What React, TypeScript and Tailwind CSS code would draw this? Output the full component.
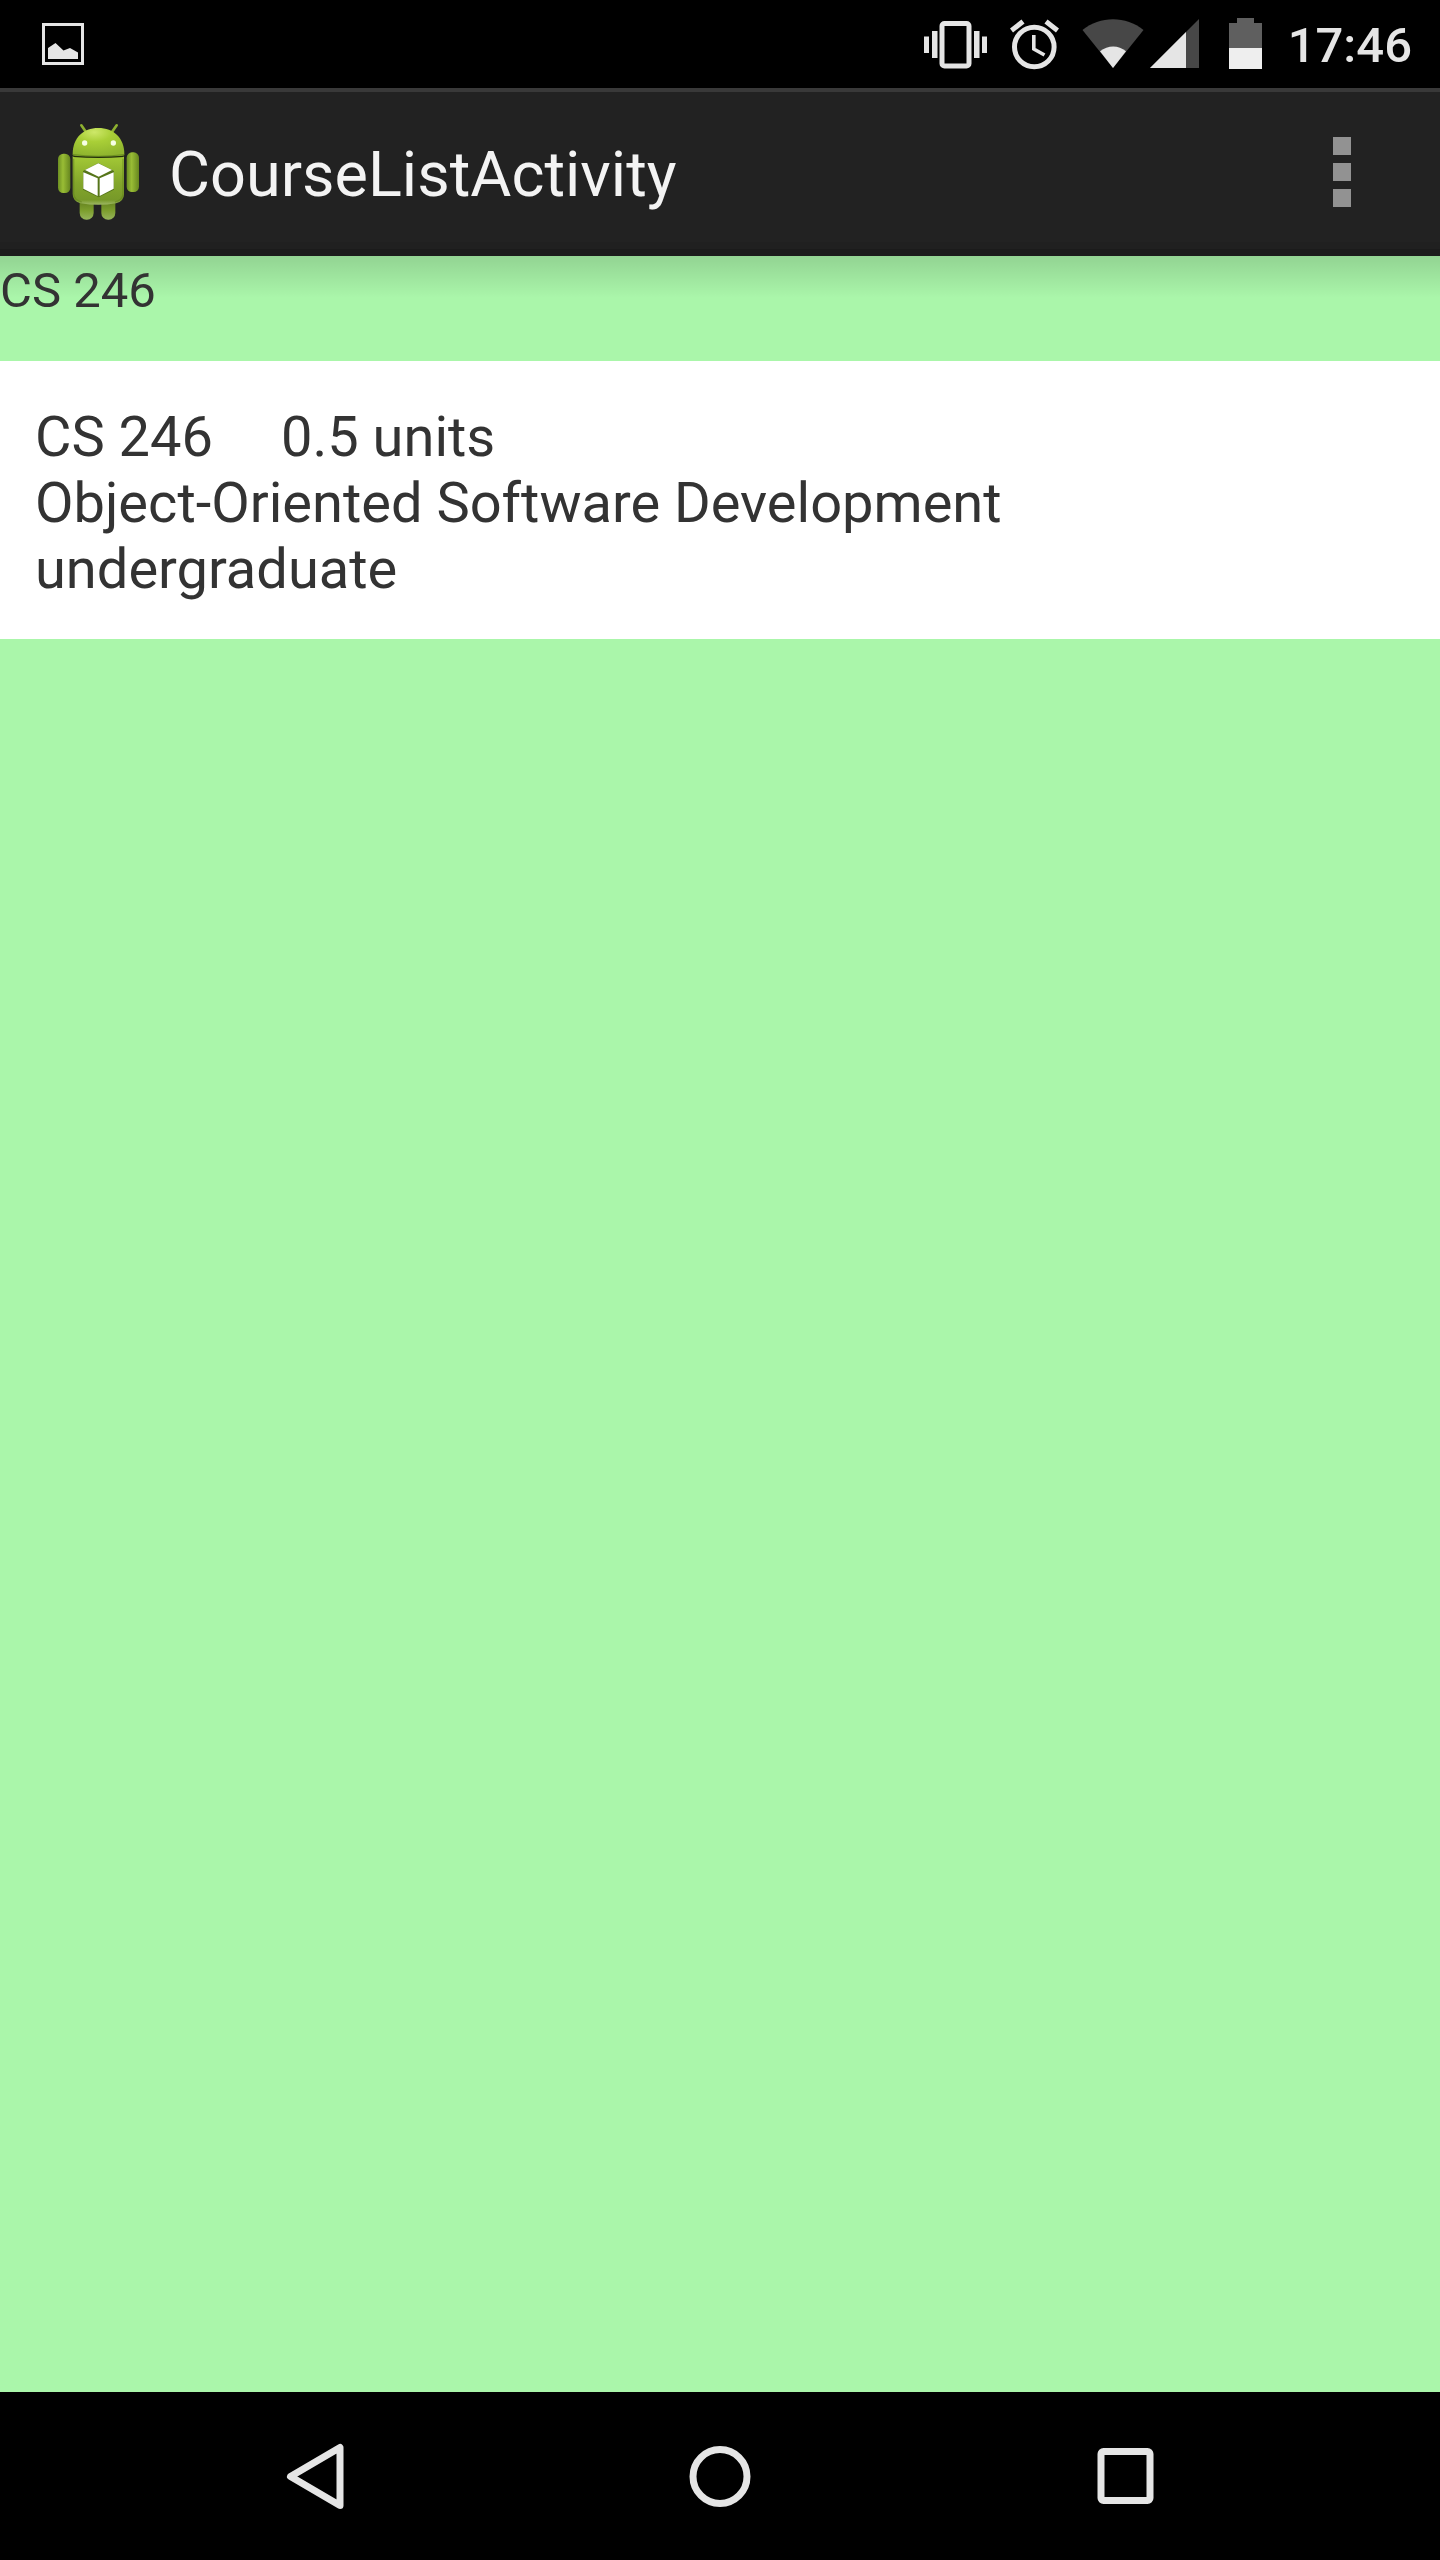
import React from "react";

type Course = { code: string; units: string; title: string; level: string };

const courses: Course[] = [
  {
    code: "CS 246",
    units: "0.5 units",
    title: "Object-Oriented Software Development",
    level: "undergraduate",
  },
];

function PictureIcon() {
  return (
    <svg className="h-[42px] w-[42px]" viewBox="0 0 42 42" aria-hidden="true">
      <rect x="1.5" y="1.5" width="39" height="39" fill="none" stroke="#e5e5e5" strokeWidth="3" />
      <path d="M6 25 L13.500 20 L21.500 27.500 L28 25 L36 29.500 V36 H6 Z" fill="#e5e5e5" />
    </svg>
  );
}

function VibrateIcon() {
  return (
    <svg className="h-[52px] w-[63px]" viewBox="0 0 63 52" aria-hidden="true">
      <g fill="#e5e5e5">
        <rect x="0" y="18.500" width="5" height="16.500" />
        <rect x="8" y="13" width="5.500" height="27" />
        <rect x="50" y="13" width="5.500" height="27" />
        <rect x="58" y="18.500" width="5" height="16.500" />
      </g>
      <rect x="18" y="5.500" width="27" height="42.500" rx="2.500" fill="none" stroke="#e5e5e5" strokeWidth="5" />
    </svg>
  );
}

function AlarmIcon() {
  return (
    <svg className="h-[52px] w-[49px]" viewBox="0 0 49 52" aria-hidden="true" fill="none" stroke="#e5e5e5">
      <circle cx="24.300" cy="29" r="19.800" strokeWidth="5" />
      <path d="M23.800 17 V31 L34.500 37" strokeWidth="3.600" />
      <path d="M1.500 12.500 L13 3.500 M47.500 12.500 L36 3.500" strokeWidth="5" />
    </svg>
  );
}

function WifiIcon() {
  return (
    <svg className="h-[52px] w-[62px]" viewBox="0 0 62 52" aria-hidden="true">
      <path d="M0.500 12 C18 -2.500 44 -2.500 61.500 12 L31 50 Z" fill="#474747" />
      <path d="M18 33.300 C26 27 36.500 27 44 33.300 L31 50 Z" fill="#e5e5e5" />
    </svg>
  );
}

function SignalIcon() {
  return (
    <svg className="h-[52px] w-[49px]" viewBox="0 0 49 52" aria-hidden="true">
      <path d="M0 50 L49 1 V50 Z" fill="#474747" />
      <path d="M0 50 L36 14 V50 Z" fill="#e5e5e5" />
    </svg>
  );
}

function BatteryIcon() {
  return (
    <svg className="h-[52px] w-[33px]" viewBox="0 0 33 52" aria-hidden="true">
      <path d="M0 5 H8 V0 H25 V5 H33 V51 H0 Z" fill="#5f5f5f" />
      <rect y="30" width="33" height="21" fill="#eeeeee" />
    </svg>
  );
}

function RobotIcon() {
  return (
    <svg className="h-[100px] w-[84px]" viewBox="51 126 252 300" aria-hidden="true">
      <defs>
        <linearGradient id="torso" x1="0" y1="0" x2="0" y2="1">
          <stop offset="0" stopColor="#a3c936" />
          <stop offset="0.55" stopColor="#83a62b" />
          <stop offset="0.9" stopColor="#779929" />
          <stop offset="1" stopColor="#9fb966" />
        </linearGradient>
        <linearGradient id="limb" x1="0" y1="0" x2="1" y2="0">
          <stop offset="0" stopColor="#6c8f22" />
          <stop offset="0.4" stopColor="#99bd35" />
          <stop offset="1" stopColor="#66861f" />
        </linearGradient>
        <linearGradient id="leg" x1="0" y1="0" x2="0" y2="1">
          <stop offset="0" stopColor="#587318" />
          <stop offset="0.6" stopColor="#7c9e2d" />
          <stop offset="1" stopColor="#96b45a" />
        </linearGradient>
        <radialGradient id="head" cx="0.42" cy="0.15" r="0.85">
          <stop offset="0" stopColor="#cee869" />
          <stop offset="0.4" stopColor="#a9cf37" />
          <stop offset="1" stopColor="#8fb52e" />
        </radialGradient>
      </defs>
      <path d="M124 136 L138 156 M230 136 L216 156" stroke="#8db02f" strokeWidth="8" strokeLinecap="round" />
      <rect x="119" y="350" width="42" height="69" rx="20" fill="url(#leg)" />
      <rect x="184" y="350" width="42" height="69" rx="20" fill="url(#leg)" />
      <rect x="54" y="221" width="37" height="118" rx="16" fill="url(#limb)" />
      <rect x="260" y="217" width="37" height="119" rx="16" fill="url(#limb)" />
      <path d="M98 229 H252 V342 Q252 364 228 370 Q175 379 122 370 Q98 364 98 342 Z" fill="url(#torso)" />
      <path d="M101 236 V341 Q102 360 125 366 M249 236 V341 Q248 360 225 366" fill="none" stroke="#5e7e19" strokeOpacity="0.5" strokeWidth="4" />
      <path d="M98 222 C98 174 129 144 175 144 C221 144 253 174 253 222 Q253 228 246 228 H105 Q98 228 98 222 Z" fill="url(#head)" />
      <path d="M98 222 Q175 233 253 222 V226 Q175 234 98 226 Z" fill="#6c8f22" />
      <path d="M100 229 Q175 235 251 229" fill="none" stroke="#23300a" strokeWidth="4" />
      <circle cx="134" cy="189" r="8" fill="#f6ffe4" />
      <circle cx="220" cy="189" r="8" fill="#f6ffe4" />
      <path d="M129 273 L175 249 L222 273 V329 L176 352 L129 329 Z" fill="#56751a" />
      <path d="M135 270 L175 250 L216 270 L176 290 Z M130 277 L173 295 V348 L130 326 Z M179 295 L221 277 V326 L179 348 Z" fill="#ffffff" />
    </svg>
  );
}

function StatusBar() {
  return (
    <div className="flex h-[88px] shrink-0 items-center justify-between bg-black pr-7 pl-[42px]">
      <PictureIcon />
      <div className="flex items-center">
        <div className="flex items-center gap-[23px]">
          <VibrateIcon />
          <AlarmIcon />
          <WifiIcon />
        </div>
        <div className="ml-1.5 flex items-center gap-[30px]">
          <SignalIcon />
          <BatteryIcon />
        </div>
        <time className="ml-[26px] pt-1 text-[49px] leading-[58px] font-medium text-[#e5e5e5]">17:46</time>
      </div>
    </div>
  );
}

function ActionBar() {
  return (
    <header className="flex h-[168px] shrink-0 items-center justify-between bg-[#222222] pr-[42px] pl-[57px] shadow-[inset_0_4px_0_#393939,inset_0_-7px_0_#1b1b1b,inset_0_-14px_0_#202020]">
      <div className="flex items-center gap-7">
        <RobotIcon />
        <h1 className="pt-1.5 text-[63px] leading-[74px] text-[#f3f3f3]">CourseListActivity</h1>
      </div>
      <button
        type="button"
        aria-label="More options"
        className="flex h-full w-28 flex-col items-center justify-center gap-2"
      >
        <span className="size-[18px] bg-[#929292]" />
        <span className="size-[18px] bg-[#929292]" />
        <span className="size-[18px] bg-[#929292]" />
      </button>
    </header>
  );
}

function NavigationBar() {
  return (
    <nav className="flex h-[168px] shrink-0 items-center justify-between bg-black px-[175px]">
      <button type="button" aria-label="Back" className="flex h-full w-[280px] items-center justify-center">
        <svg className="size-[70px]" viewBox="0 0 70 70" fill="none" stroke="#e5e5e5" strokeWidth="7" strokeLinejoin="round">
          <path d="M10.500 35.500 L60 6.500 V64.500 Z" />
        </svg>
      </button>
      <button type="button" aria-label="Home" className="flex h-full w-[280px] items-center justify-center">
        <svg className="size-[70px]" viewBox="0 0 70 70" fill="none" stroke="#e5e5e5" strokeWidth="7">
          <circle cx="35" cy="35.500" r="27" />
        </svg>
      </button>
      <button type="button" aria-label="Recent apps" className="flex h-full w-[280px] items-center justify-center">
        <svg className="size-[70px]" viewBox="0 0 70 70" fill="none" stroke="#e5e5e5" strokeWidth="7">
          <rect x="11" y="10.500" width="49" height="49" rx="2.500" />
        </svg>
      </button>
    </nav>
  );
}

export default function App() {
  return (
    <div className="flex min-h-screen flex-col bg-[#aaf6aa] font-[Roboto,sans-serif] text-[#333333]">
      <StatusBar />
      <ActionBar />
      <main className="flex-1">
        <div className="bg-linear-to-b from-black/14 to-transparent to-[42px] pt-1.5 pb-[41px]">
          <h2 className="text-[49px] leading-[58px]">CS 246</h2>
        </div>
        <ul>
          {courses.map((course) => (
            <li key={course.code} className="bg-white px-[35px] pt-[43px] pb-[37px] text-[56px] leading-[66px]">
              <div className="flex gap-[68px]">
                <span>{course.code}</span>
                <span>{course.units}</span>
              </div>
              <p>{course.title}</p>
              <p>{course.level}</p>
            </li>
          ))}
        </ul>
      </main>
      <NavigationBar />
    </div>
  );
}
